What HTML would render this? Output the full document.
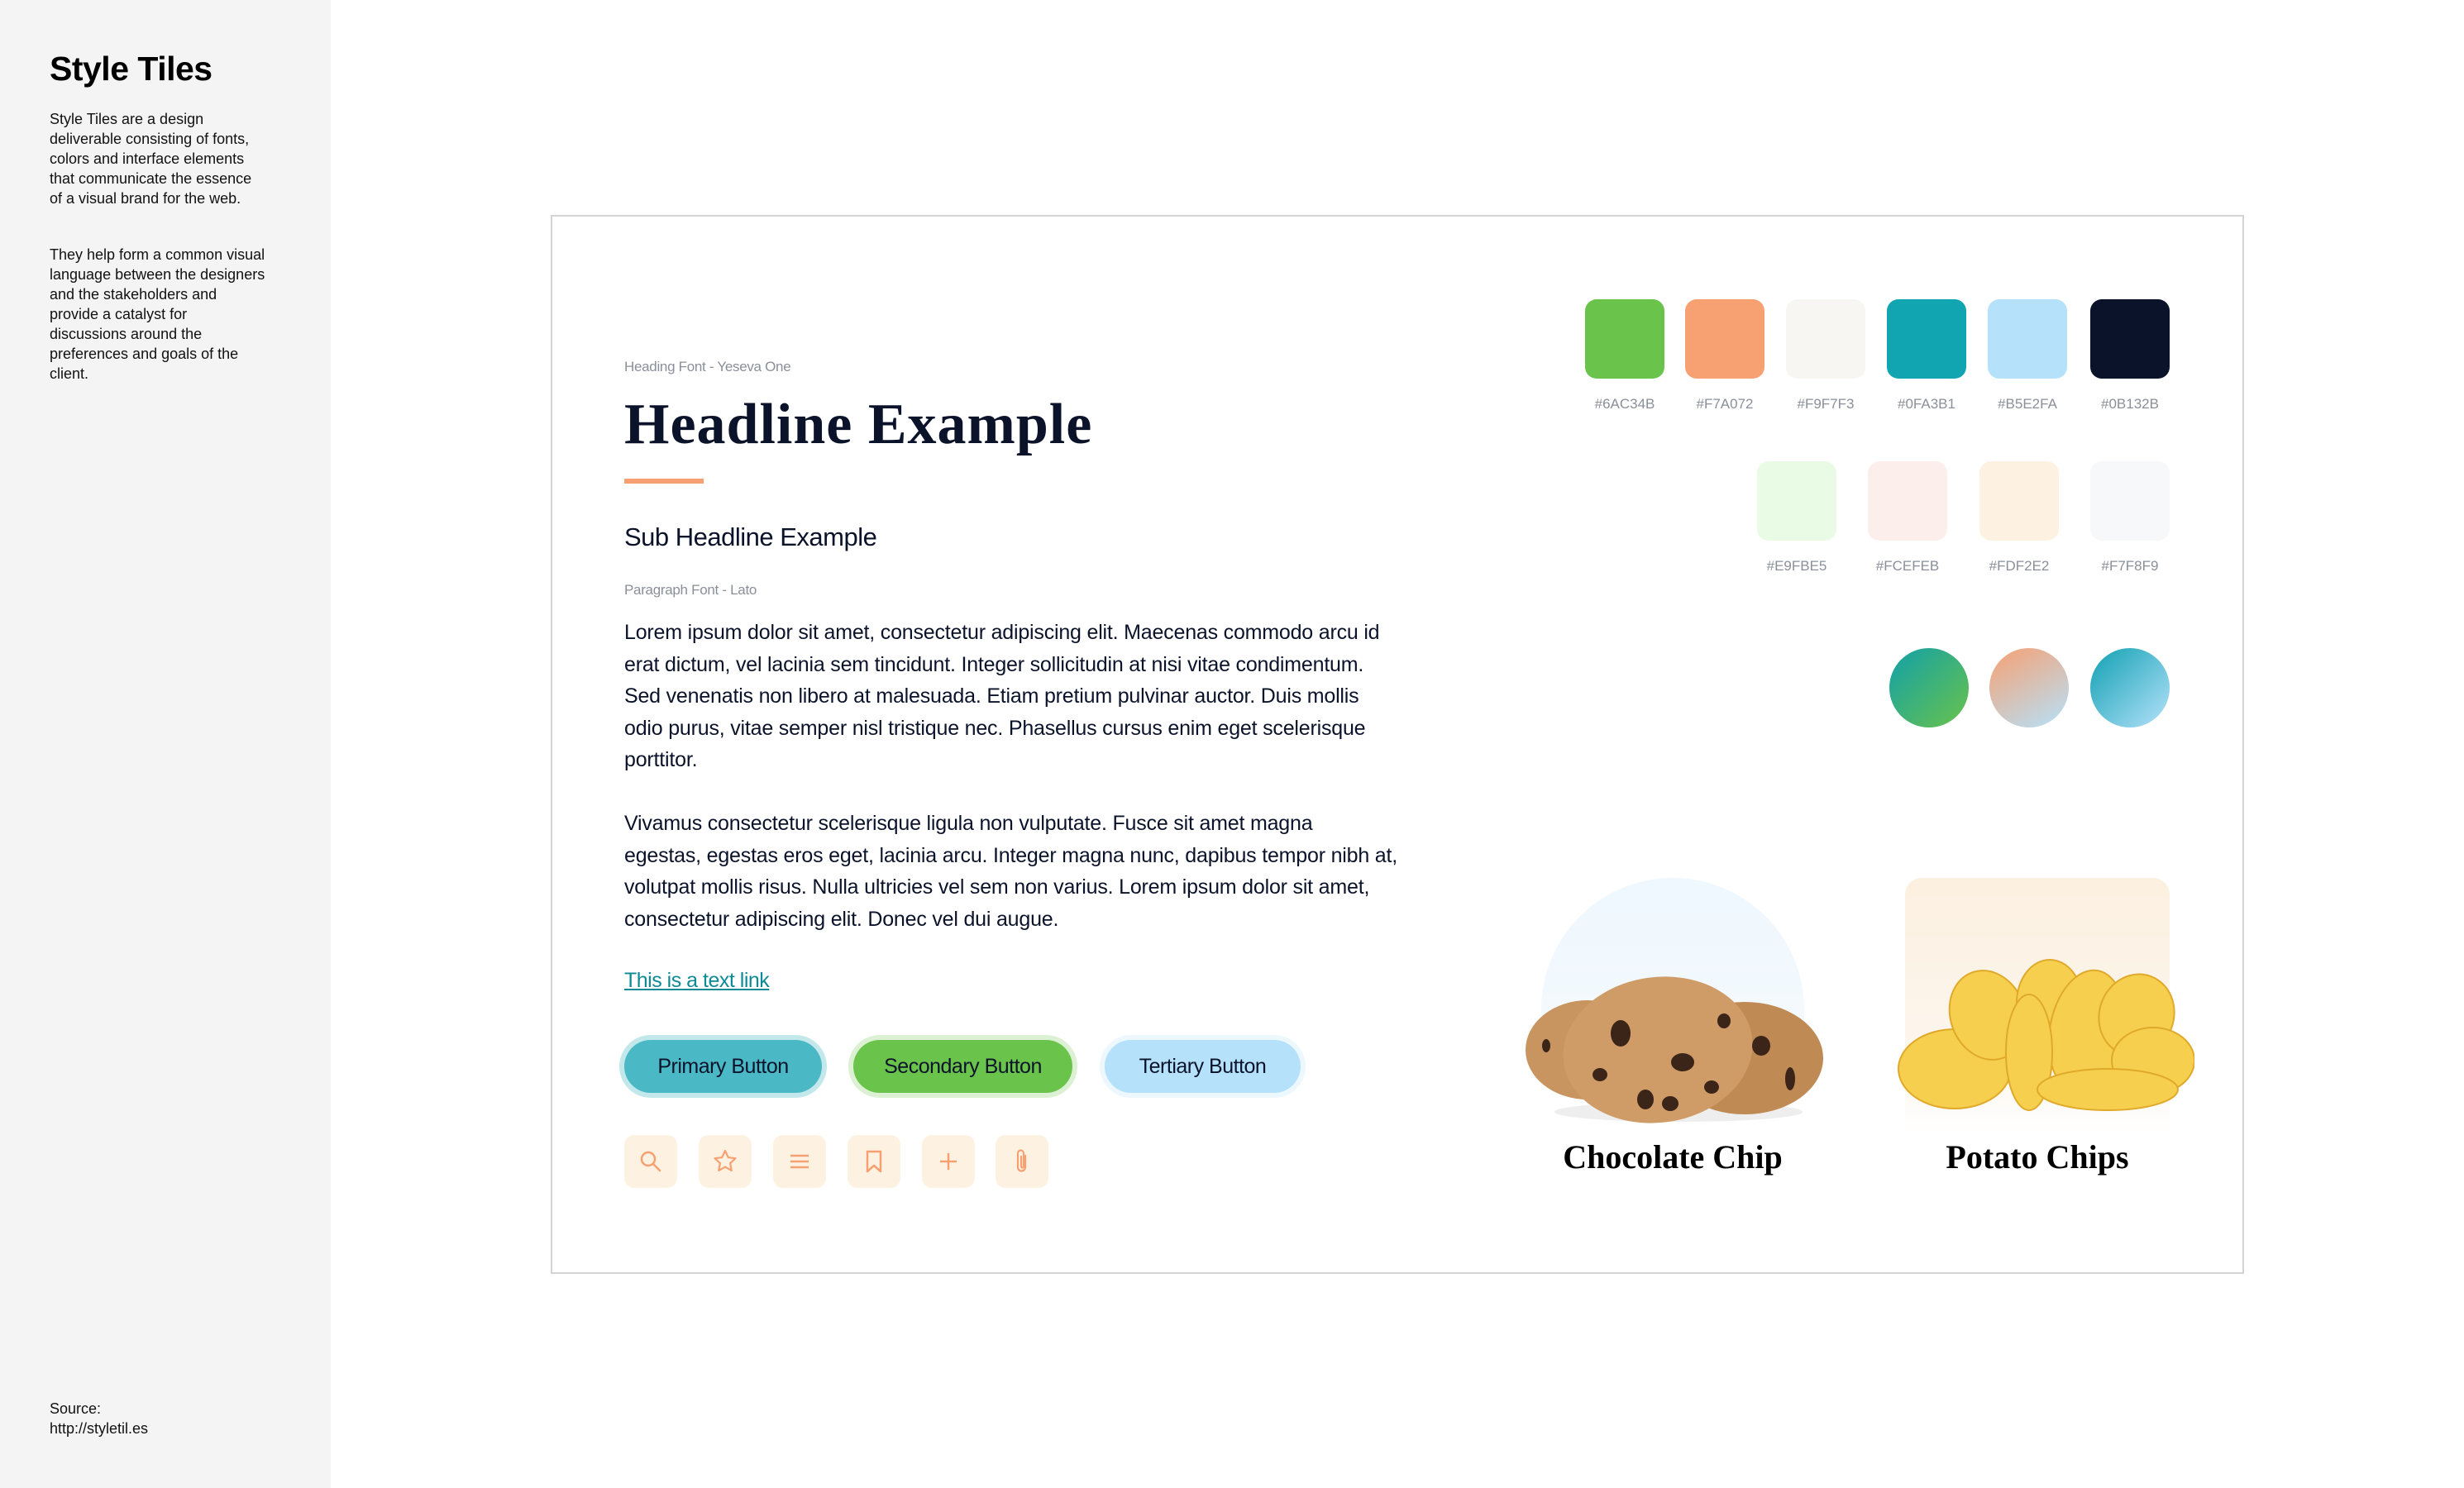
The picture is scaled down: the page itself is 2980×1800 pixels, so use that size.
<!DOCTYPE html>
<html><head><meta charset="utf-8"><style>
*{margin:0;padding:0;box-sizing:border-box}
body{width:2980px;height:1800px;position:relative;background:#fff;font-family:"Liberation Sans",sans-serif;overflow:hidden}
.a{position:absolute}
.side{left:0;top:0;width:400px;height:1800px;background:#f4f4f4}
.sp{font-size:18px;line-height:24px;color:#111;white-space:nowrap}
.card{left:666px;top:260px;width:2048px;height:1281px;border:2px solid #d4d4d4}
.lbl{font-size:17px;color:#8a8f99;letter-spacing:-0.3px}
.body{font-size:25px;line-height:38.6px;color:#0b132b;white-space:nowrap;letter-spacing:-0.2px}
.btn{height:76px;border-radius:38px;padding:6px}
.btn div{height:64px;border-radius:32px;font-size:25px;color:#0b132b;text-align:center;line-height:64px;letter-spacing:-0.5px}
.ic{top:1373px;width:64px;height:64px;border-radius:12px;background:#fdf2e2}
.ic svg{position:absolute;left:16px;top:16px}
.sw{width:96px;height:96px;border-radius:14px}
.hx{font-size:17px;color:#8a8f99;width:120px;text-align:center}
.serif{font-family:"Liberation Serif",serif;font-weight:bold;color:#0b132b}
</style></head><body>
<div class="a side"></div>
<div class="a" style="left:60px;top:60px;font-size:41px;font-weight:bold;color:#000;letter-spacing:-0.5px">Style Tiles</div>
<div class="a sp" style="left:60px;top:132px">Style Tiles are a design<br>deliverable consisting of fonts,<br>colors and interface elements<br>that communicate the essence<br>of a visual brand for the web.</div>
<div class="a sp" style="left:60px;top:296px">They help form a common visual<br>language between the designers<br>and the stakeholders and<br>provide a catalyst for<br>discussions around the<br>preferences and goals of the<br>client.</div>
<div class="a sp" style="left:60px;top:1692px">Source:<br>http://styletil.es</div>

<div class="a card"></div>
<div class="a lbl" style="left:755px;top:434px">Heading Font - Yeseva One</div>
<div class="a serif" style="left:755px;top:474px;font-size:70px;white-space:nowrap;letter-spacing:1px">Headline Example</div>
<div class="a" style="left:755px;top:579px;width:96px;height:6px;background:#f7a072"></div>
<div class="a" style="left:755px;top:632px;font-size:31px;color:#0b132b;letter-spacing:-0.5px">Sub Headline Example</div>
<div class="a lbl" style="left:755px;top:704px">Paragraph Font - Lato</div>
<div class="a body" style="left:755px;top:746px">Lorem ipsum dolor sit amet, consectetur adipiscing elit. Maecenas commodo arcu id<br>erat dictum, vel lacinia sem tincidunt. Integer sollicitudin at nisi vitae condimentum.<br>Sed venenatis non libero at malesuada. Etiam pretium pulvinar auctor. Duis mollis<br>odio purus, vitae semper nisl tristique nec. Phasellus cursus enim eget scelerisque<br>porttitor.</div>
<div class="a body" style="left:755px;top:977px">Vivamus consectetur scelerisque ligula non vulputate. Fusce sit amet magna<br>egestas, egestas eros eget, lacinia arcu. Integer magna nunc, dapibus tempor nibh at,<br>volutpat mollis risus. Nulla ultricies vel sem non varius. Lorem ipsum dolor sit amet,<br>consectetur adipiscing elit. Donec vel dui augue.</div>
<div class="a" style="left:755px;top:1172px;font-size:25px;text-decoration:underline;letter-spacing:-0.5px;color:#0e8a96">This is a text link</div>

<div class="a btn" style="left:749px;top:1252px;width:251px;background:#c3e8ec"><div style="background:#4bb9c5">Primary Button</div></div>
<div class="a btn" style="left:1026px;top:1252px;width:277px;background:#dcf0d3"><div style="background:#6ac34b">Secondary Button</div></div>
<div class="a btn" style="left:1330px;top:1252px;width:249px;background:#edf7fe"><div style="background:#b5e2fa">Tertiary Button</div></div>

<div class="a ic" style="left:755px"><svg width="32" height="32" viewBox="0 0 32 32" fill="none" stroke="#f7a072" stroke-width="2.5" stroke-linecap="round"><circle cx="13" cy="13" r="8"/><path d="M19 19l8 8"/></svg></div>
<div class="a ic" style="left:845px"><svg width="32" height="32" viewBox="0 0 32 32" fill="none" stroke="#f7a072" stroke-width="2.2" stroke-linejoin="round"><path d="M16 3l3.8 8.2 8.7 1-6.4 6 1.7 8.8L16 22.6 8.2 27l1.7-8.8-6.4-6 8.7-1z"/></svg></div>
<div class="a ic" style="left:935px"><svg width="32" height="32" viewBox="0 0 32 32" fill="none" stroke="#f7a072" stroke-width="2.5"><path d="M5 9h22M5 16h22M5 23h22"/></svg></div>
<div class="a ic" style="left:1025px"><svg width="32" height="32" viewBox="0 0 32 32" fill="none" stroke="#f7a072" stroke-width="2.5" stroke-linejoin="round"><path d="M8 4h16v24l-8-7-8 7z"/></svg></div>
<div class="a ic" style="left:1115px"><svg width="32" height="32" viewBox="0 0 32 32" fill="none" stroke="#f7a072" stroke-width="2.5"><path d="M16 6v20M6 16h20"/></svg></div>
<div class="a ic" style="left:1204px"><svg width="32" height="32" viewBox="0 0 32 32" fill="none" stroke="#f7a072" stroke-width="2.2" stroke-linecap="round"><path d="M20 9v14a4.5 4.5 0 0 1-9 0V6a3.5 3.5 0 0 1 7 0v16a1.5 1.5 0 0 1-3 0V10"/></svg></div>

<div class="a sw" style="left:1917px;top:362px;background:#6ac34b"></div>
<div class="a sw" style="left:2038px;top:362px;background:#f7a072"></div>
<div class="a sw" style="left:2160px;top:362px;background:#f7f6f2"></div>
<div class="a sw" style="left:2282px;top:362px;background:#11a4b1"></div>
<div class="a sw" style="left:2404px;top:362px;background:#b5e2fa"></div>
<div class="a sw" style="left:2528px;top:362px;background:#0b132b"></div>
<div class="a hx" style="left:1905px;top:479px">#6AC34B</div>
<div class="a hx" style="left:2026px;top:479px">#F7A072</div>
<div class="a hx" style="left:2148px;top:479px">#F9F7F3</div>
<div class="a hx" style="left:2270px;top:479px">#0FA3B1</div>
<div class="a hx" style="left:2392px;top:479px">#B5E2FA</div>
<div class="a hx" style="left:2516px;top:479px">#0B132B</div>

<div class="a sw" style="left:2125px;top:558px;background:#e9fbe5"></div>
<div class="a sw" style="left:2259px;top:558px;background:#fcefeb"></div>
<div class="a sw" style="left:2394px;top:558px;background:#fdf2e2"></div>
<div class="a sw" style="left:2528px;top:558px;background:#f7f8f9"></div>
<div class="a hx" style="left:2113px;top:675px">#E9FBE5</div>
<div class="a hx" style="left:2247px;top:675px">#FCEFEB</div>
<div class="a hx" style="left:2382px;top:675px">#FDF2E2</div>
<div class="a hx" style="left:2516px;top:675px">#F7F8F9</div>

<div class="a" style="left:2285px;top:784px;width:96px;height:96px;border-radius:50%;background:linear-gradient(135deg,#11a0a8,#6ac34b)"></div>
<div class="a" style="left:2406px;top:784px;width:96px;height:96px;border-radius:50%;background:linear-gradient(150deg,#f7a072,#b5e2fa)"></div>
<div class="a" style="left:2528px;top:784px;width:96px;height:96px;border-radius:50%;background:linear-gradient(135deg,#11a0b3,#b5e2fa)"></div>

<div class="a" style="left:1864px;top:1062px;width:318px;height:260px;border-radius:159px 159px 0 0;background:linear-gradient(#eef8fe,#f4f9fd 70%,#fff)"></div>
<svg class="a" style="left:1840px;top:1175px" width="380" height="190" viewBox="0 0 380 190">
<ellipse cx="190" cy="170" rx="150" ry="12" fill="#ddd" opacity=".5"/>
<ellipse cx="270" cy="105" rx="95" ry="68" fill="#c08a55"/>
<ellipse cx="80" cy="95" rx="75" ry="60" fill="#c89460"/>
<ellipse cx="165" cy="95" rx="115" ry="88" fill="#cf9c68" transform="rotate(-8 165 95)"/>
<g fill="#3b2418"><ellipse cx="120" cy="75" rx="12" ry="16"/><ellipse cx="195" cy="110" rx="14" ry="11"/><ellipse cx="150" cy="155" rx="10" ry="12"/><ellipse cx="95" cy="125" rx="9" ry="8"/><ellipse cx="245" cy="60" rx="8" ry="9"/><ellipse cx="290" cy="90" rx="11" ry="12"/><ellipse cx="325" cy="130" rx="6" ry="14"/><ellipse cx="230" cy="140" rx="9" ry="8"/><ellipse cx="180" cy="160" rx="10" ry="9"/><ellipse cx="30" cy="90" rx="5" ry="8"/></g>
</svg>
<div class="a serif" style="left:1843px;top:1376px;width:360px;text-align:center;font-size:40px;color:#000">Chocolate Chip</div>
<div class="a" style="left:2304px;top:1062px;width:320px;height:310px;border-radius:20px 20px 0 0;background:linear-gradient(#fcf0e0,#fdf6ee 70%,#fff)"></div>
<svg class="a" style="left:2294px;top:1158px" width="360" height="190" viewBox="0 0 360 190">
<g fill="#f6cf4e" stroke="#e0a92a" stroke-width="2">
<ellipse cx="70" cy="135" rx="68" ry="48"/>
<ellipse cx="110" cy="70" rx="45" ry="55" transform="rotate(-20 110 70)"/>
<ellipse cx="185" cy="55" rx="40" ry="52"/>
<ellipse cx="230" cy="90" rx="45" ry="75" transform="rotate(10 230 90)"/>
<ellipse cx="290" cy="70" rx="45" ry="50" transform="rotate(20 290 70)"/>
<ellipse cx="160" cy="115" rx="28" ry="70"/>
<ellipse cx="310" cy="125" rx="50" ry="40"/>
<ellipse cx="255" cy="160" rx="85" ry="25"/>
</g></svg>
<div class="a serif" style="left:2284px;top:1376px;width:360px;text-align:center;font-size:40px;color:#000">Potato Chips</div>
</body></html>
